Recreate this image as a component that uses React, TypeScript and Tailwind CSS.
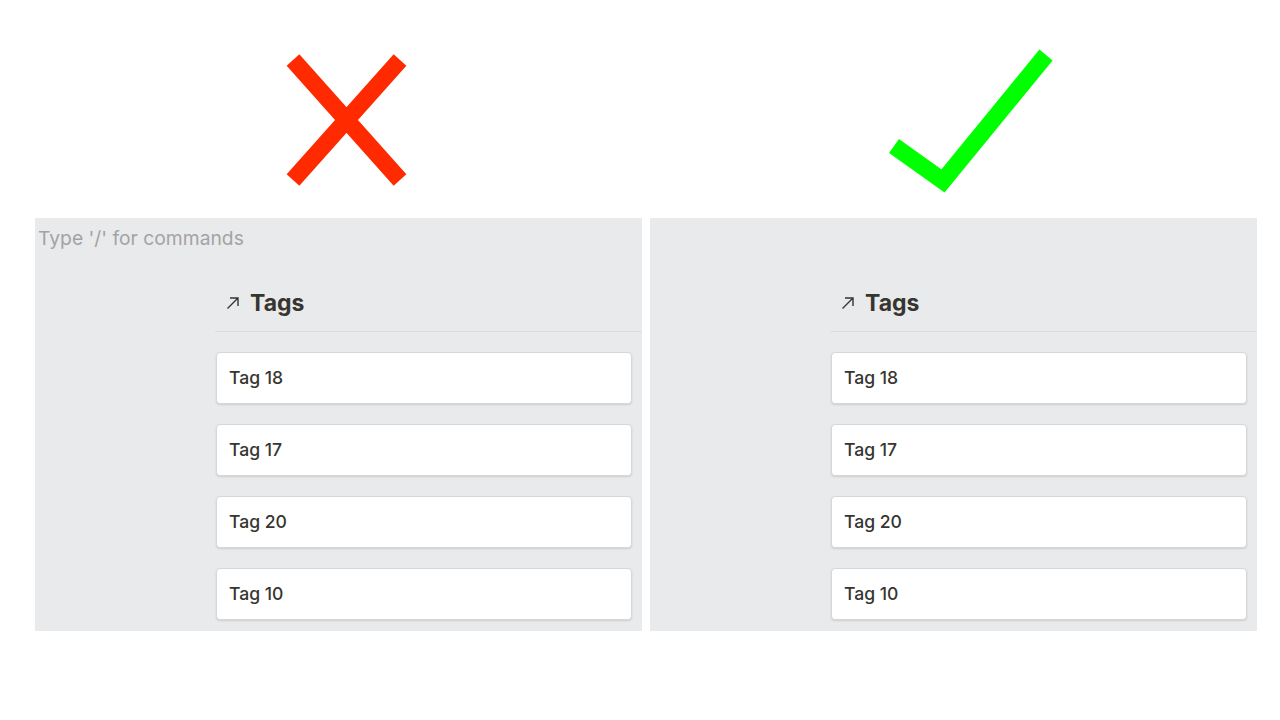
import React from 'react';

const tags = ['Tag 18', 'Tag 17', 'Tag 20', 'Tag 10'];

const ArrowIcon = () => (
  <svg width="16" height="16" viewBox="0 0 16 16" className="shrink-0">
    <path d="M2.5 13.5 L13 3 M5 3 H13 V11" fill="none" stroke="#37352f" strokeWidth="1.4" />
  </svg>
);

const Panel = ({ showPlaceholder }: { showPlaceholder: boolean }) => (
  <div className="flex flex-col bg-[#e9eaec] h-[413px] pb-[11px]">
    <div className="h-[40px] pl-[3px] pt-[9px] text-[19.3px] leading-[22px] text-[#a3a3a3]">
      {showPlaceholder ? "Type '/' for commands" : ''}
    </div>
    <div className="ml-[180px] flex flex-col">
      <div className="flex items-center gap-[9px] pl-[10px] pt-[33px] pb-[16px] border-b border-[#dcdddf]">
        <ArrowIcon />
        <span className="text-[23px] leading-[24px] font-bold text-[#37352f]">Tags</span>
      </div>
      <div className="flex flex-col gap-[20px] mt-[20px] mr-[10px] ml-[1px]">
        {tags.map(t => (
          <div
            key={t}
            className="h-[52px] flex items-center pl-[12px] bg-white rounded-[4px] border border-[#d6d7d9] shadow-[0_1px_2px_rgba(0,0,0,0.12)] text-[17.6px] font-medium text-[#37352f]"
          >
            {t}
          </div>
        ))}
      </div>
    </div>
  </div>
);

export default function App() {
  return (
    <div className="w-[1280px] h-[720px] bg-white flex gap-[8px] pl-[35px] font-['Inter',sans-serif]">
      <div className="w-[607px] flex flex-col">
        <svg width="607" height="218" viewBox="0 0 607 218">
          <path d="M258 60 L365 180 M365 60 L258 180" stroke="#ff2a00" strokeWidth="17" fill="none" />
        </svg>
        <Panel showPlaceholder={true} />
      </div>
      <div className="w-[607px] flex flex-col">
        <svg width="607" height="218" viewBox="0 0 607 218">
          <path d="M244 146 L293 181 L396 55" stroke="#00ff00" strokeWidth="17" fill="none" strokeLinejoin="miter" />
        </svg>
        <Panel showPlaceholder={false} />
      </div>
    </div>
  );
}
